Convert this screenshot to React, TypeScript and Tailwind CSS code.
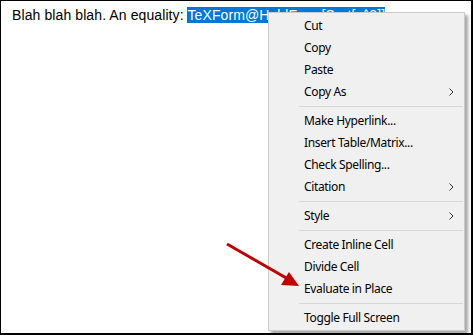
import React from "react";

type Item = { label: string; sub?: boolean } | "sep";

const items: Item[] = [
  { label: "Cut" },
  { label: "Copy" },
  { label: "Paste" },
  { label: "Copy As", sub: true },
  "sep",
  { label: "Make Hyperlink..." },
  { label: "Insert Table/Matrix..." },
  { label: "Check Spelling..." },
  { label: "Citation", sub: true },
  "sep",
  { label: "Style", sub: true },
  "sep",
  { label: "Create Inline Cell" },
  { label: "Divide Cell" },
  { label: "Evaluate in Place" },
  "sep",
  { label: "Toggle Full Screen" },
];

function Chevron() {
  return (
    <svg width="5" height="8" viewBox="0 0 5 8" className="block">
      <path d="M0.5 0.5 L4 4 L0.5 7.5" fill="none" stroke="#333" strokeWidth="1" />
    </svg>
  );
}

export default function App() {
  return (
    <div className="relative w-[473px] h-[335px] bg-white border-black border-t border-l border-r-2 border-b-2 overflow-hidden">
      <div
        className="pl-[11px] pt-[6px] text-[14px] leading-[17px] tracking-[0.1px] text-black whitespace-nowrap"
        style={{ fontFamily: '"Liberation Sans", Arial, sans-serif' }}
      >
        Blah blah blah. An equality:{" "}
        <span className="bg-[#0078d7] text-white">TeXForm@HoldForm[Sqrt[x^2]]</span>
      </div>

      <div
        className="absolute left-[267px] top-[11px] w-[197px] bg-[#f0f0f0] border border-[#cccccc] pt-[2px] pb-[1px] shadow-[3px_3px_3px_rgba(0,0,0,0.35)] text-[12px] tracking-[-0.35px] text-black"
        style={{ fontFamily: '"Noto Sans", sans-serif' }}
      >
        {items.map((it, i) =>
          it === "sep" ? (
            <div key={i} className="h-[7px] flex items-center">
              <div className="ml-[30px] mr-[1px] h-px flex-1 bg-[#d7d7d7]" />
            </div>
          ) : (
            <div key={i} className="h-[22px] flex items-center pl-[35px] pr-[10px]">
              <span className="flex-1 leading-none">{it.label}</span>
              {it.sub && <Chevron />}
            </div>
          )
        )}
      </div>

      <svg className="absolute left-0 top-0" width="473" height="335" viewBox="0 0 473 335">
        <line x1="226" y1="243" x2="287" y2="278" stroke="#c00000" strokeWidth="3" />
        <polygon points="298,285 280,284 288,271" fill="#c00000" />
      </svg>
    </div>
  );
}
